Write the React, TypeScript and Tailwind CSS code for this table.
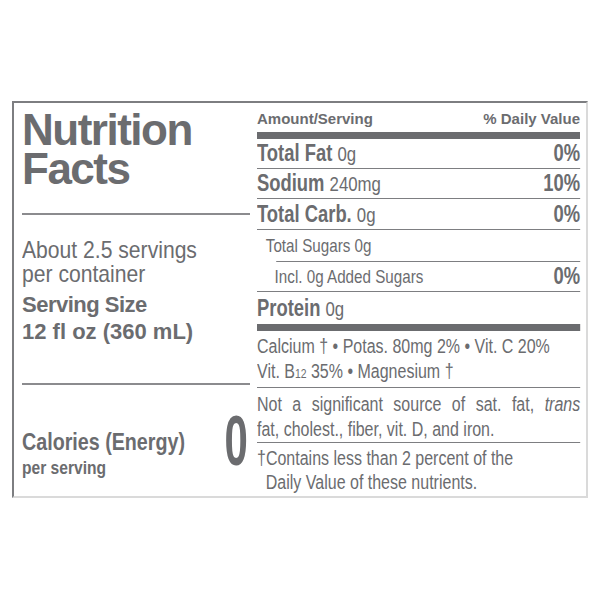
import React from "react";

const font = "font-['Liberation_Sans',Arial,sans-serif]";

// reference uses a condensed face; rows are squeezed with scale-x
function NutrientRow({ label, amount, dv, className }: { label: string; amount: string; dv?: string; className: string }) {
  return (
    <div className={`flex justify-between border-b border-[#7d7e81] text-[23px] ${className}`}>
      <span className="whitespace-nowrap">
        <span className="font-bold">{label}</span> <span className="text-[21px]">{amount}</span>
      </span>
      {dv && <span className="font-bold">{dv}</span>}
    </div>
  );
}

export default function App() {
  return (
    <div className={`${font} h-[600px] w-[600px] overflow-hidden bg-white pt-[101px] pl-[12px] text-[#6b6c6f]`}>
      <div className="flex h-[397px] w-[576px] border-2 border-t-[#7d7e81] border-l-[#7d7e81] border-r-[#dadada] border-b-[#dadada]">
        {/* left column */}
        <div className="w-[236px] shrink-0 pl-[8px]">
          <h1 className="pt-[7px] text-[44px] font-bold leading-[39px] tracking-[-1.5px]">
            Nutrition
            <br />
            Facts
          </h1>
          <div className="mt-[25px] h-[2px] bg-[#8b8b8e]" />
          <div className="mt-[23px] origin-left scale-x-[0.88] whitespace-nowrap text-[24px] leading-[24px]">
            About 2.5 servings
            <br />
            per container
          </div>
          <div className="mt-[5px] text-[22px] font-bold leading-[27px]">
            <div className="tracking-[-0.5px]">Serving Size</div>
            <div>12 fl oz (360 mL)</div>
          </div>
          <div className="mt-[38px] h-[2px] bg-[#8b8b8e]" />
          <div className="flex justify-between">
            <div className="min-w-0 flex-1 origin-left scale-x-[0.82] whitespace-nowrap font-bold">
              <div className="mt-[44px] text-[24px] leading-[25px]">Calories (Energy)</div>
              <div className="mt-[3px] text-[19px] leading-[22px]">per serving</div>
            </div>
            <span className="mt-[21px] mr-[2px] inline-block h-[70px] origin-right scale-x-[0.6] text-[70px] font-bold leading-[70px]">
              0
            </span>
          </div>
        </div>

        {/* right column */}
        <div className="ml-[7px] min-w-0 flex-1 pr-[6px]">
          <div className="flex h-[29px] justify-between pt-[3px] text-[15px] font-bold leading-[26px]">
            <span>Amount/Serving</span>
            <span>% Daily Value</span>
          </div>
          <div className="h-[7px] bg-[#6b6c6f]" />
          <div className="w-[404px] origin-top-left scale-x-[0.8]">
            <NutrientRow label="Total Fat" amount="0g" dv="0%" className="h-[30px] leading-[29px]" />
            <NutrientRow label="Sodium" amount="240mg" dv="10%" className="h-[30px] leading-[29px]" />
            <NutrientRow label="Total Carb." amount="0g" dv="0%" className="h-[31px] leading-[30px]" />
            <div className="h-[32px]">
              <div className="h-[31px] pl-[11px] text-[19px] leading-[31px]">Total Sugars 0g</div>
              <div className="ml-[24px] h-px bg-[#7d7e81]" />
            </div>
            <div className="flex h-[30px] justify-between border-b border-[#7d7e81] pl-[22px] text-[19px] leading-[29px]">
              <span>Incl. 0g Added Sugars</span>
              <span className="text-[23px] font-bold">0%</span>
            </div>
            <div className="h-[32px] text-[23px] leading-[32px]">
              <span className="font-bold">Protein</span> <span className="text-[21px]">0g</span>
            </div>
            <div className="h-[7px] bg-[#6b6c6f]" />
            <div className="h-[57px] border-b border-[#7d7e81] pt-[3px] text-[20px] leading-[25px]">
              <div>Calcium † • Potas. 80mg 2% • Vit. C 20%</div>
              <div>
                Vit. B<span className="text-[13px]">12</span> 35% • Magnesium †
              </div>
            </div>
            <div className="h-[55px] border-b border-[#7d7e81] pt-[4px] text-[20px] leading-[25px]">
              <div className="text-justify [text-align-last:justify]">
                Not a significant source of sat. fat, <i>trans</i>
              </div>
              <div>fat, cholest., fiber, vit. D, and iron.</div>
            </div>
            <div className="pt-[3px] text-[20px] leading-[24px]">
              <div>†Contains less than 2 percent of the</div>
              <div className="pl-[11px]">Daily Value of these nutrients.</div>
            </div>
          </div>
        </div>
      </div>
    </div>
  );
}
